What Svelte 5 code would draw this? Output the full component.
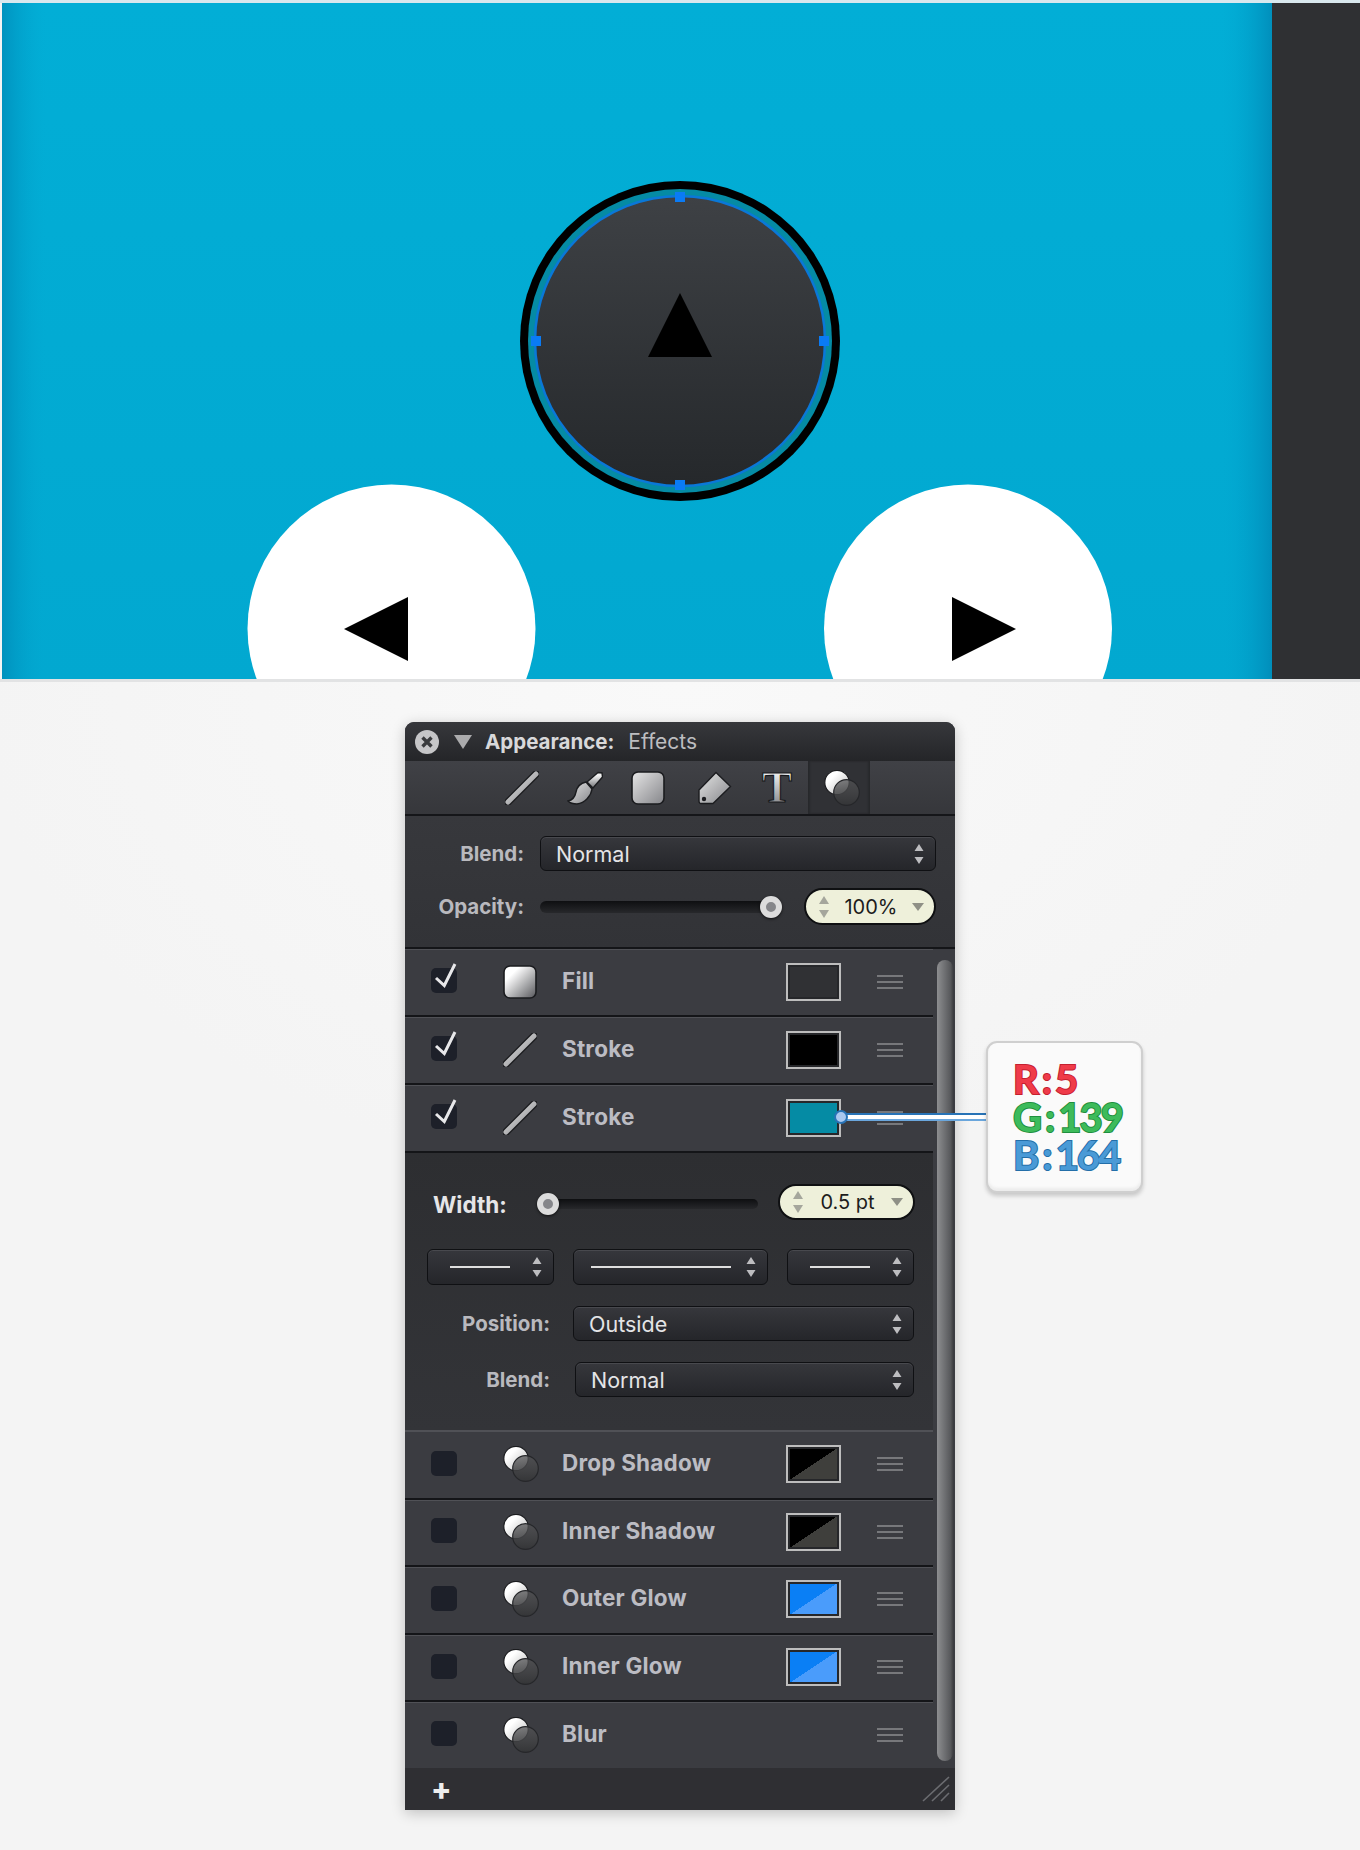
<script>
  const topRows = [
    { name: "Fill", icon: "square", on: true, swatch: "fill" },
    { name: "Stroke", icon: "line", on: true, swatch: "black" },
    { name: "Stroke", icon: "line", on: true, swatch: "teal" },
  ];
  const effectRows = [
    { name: "Drop Shadow", swatch: "shade" },
    { name: "Inner Shadow", swatch: "shade" },
    { name: "Outer Glow", swatch: "glow" },
    { name: "Inner Glow", swatch: "glow" },
    { name: "Blur", swatch: null },
  ];
</script>

{#snippet lineIcon()}
  <svg class="icon" width="34" height="34" viewBox="0 0 34 34">
    <path d="M3 31 L31 3" stroke="#1b1c1f" stroke-width="7.5" stroke-linecap="round" />
    <path d="M3 31 L31 3" stroke="url(#metal)" stroke-width="5" stroke-linecap="round" />
  </svg>
{/snippet}

{#snippet squareIcon(fill)}
  <svg class="icon" width="34" height="34" viewBox="0 0 34 34">
    <rect x="1" y="1" width="32" height="32" rx="6" fill="url(#{fill})" stroke="#1b1c1f" stroke-width="1.6" />
  </svg>
{/snippet}

{#snippet circlesIcon()}
  <svg class="icon" width="36" height="36" viewBox="0 0 36 36">
    <circle cx="13" cy="12.5" r="12.2" fill="url(#pearl)" stroke="#1b1c1f" stroke-width="1.2" />
    <circle cx="22.5" cy="22.5" r="12.8" fill="url(#smoke)" stroke="#26272a" stroke-width="1.2" />
  </svg>
{/snippet}

{#snippet arrows()}
  <svg class="arrows" width="10" height="20" viewBox="0 0 10 20">
    <path d="M5 0 L9.5 7 H0.5Z M0.5 13 H9.5 L5 20Z" fill="#bdbdc0" />
  </svg>
{/snippet}

{#snippet pillValue(text)}
  <div class="pill">
    <svg width="12" height="22" viewBox="0 0 12 22"><path d="M6 0 L11 8 H1Z M1 14 H11 L6 22Z" fill="#a5a69c" /></svg>
    <span>{text}</span>
    <svg width="12" height="8" viewBox="0 0 12 8"><path d="M0 0 H12 L6 8Z" fill="#8f9086" /></svg>
  </div>
{/snippet}

{#snippet row(r, extraClass)}
  <div class="row {extraClass}">
    <svg class="check" width="30" height="36" viewBox="0 0 30 36">
      <rect x="2" y="8" width="26" height="25" rx="5" fill="#1d2029" />
      {#if r.on}
        <path d="M7 18 L15.3 25.5 L26 4" fill="none" stroke="#e8e8ea" stroke-width="3" />
      {/if}
    </svg>
    <div class="row-icon">
      {#if r.icon === "square"}
        {@render squareIcon("pearlsquare")}
      {:else if r.icon === "line"}
        {@render lineIcon()}
      {:else}
        {@render circlesIcon()}
      {/if}
    </div>
    <span class="row-name">{r.name}</span>
    {#if r.swatch}
      <div class="swatch {r.swatch}"></div>
    {/if}
    <div class="handle"><i></i><i></i><i></i></div>
  </div>
{/snippet}

<svg class="defs" width="0" height="0">
  <defs>
    <linearGradient id="metal" x1="0" y1="0" x2="1" y2="1">
      <stop offset="0" stop-color="#e6e6e6" />
      <stop offset="1" stop-color="#85868a" />
    </linearGradient>
    <linearGradient id="pearl" x1="0" y1="0" x2="1" y2="1">
      <stop offset="0.3" stop-color="#ffffff" />
      <stop offset="1" stop-color="#b5b5b5" />
    </linearGradient>
    <linearGradient id="pearlsquare" x1="0" y1="0" x2="1" y2="1">
      <stop offset="0.25" stop-color="#ffffff" />
      <stop offset="1" stop-color="#55565a" />
    </linearGradient>
    <linearGradient id="smoke" x1="0" y1="0" x2="0" y2="1">
      <stop offset="0" stop-color="#555557" stop-opacity="0.72" />
      <stop offset="1" stop-color="#343537" stop-opacity="0.95" />
    </linearGradient>
    <linearGradient id="glyph" x1="0" y1="0" x2="0" y2="1">
      <stop offset="0.2" stop-color="#f2f2f2" />
      <stop offset="0.85" stop-color="#8a8b8e" />
    </linearGradient>
    <linearGradient id="disc" x1="0" y1="0" x2="0" y2="1">
      <stop offset="0" stop-color="#3e4145" />
      <stop offset="1" stop-color="#25282b" />
    </linearGradient>
    <linearGradient id="edge" x1="0" y1="0" x2="1" y2="0">
      <stop offset="0" stop-color="#0087b5" stop-opacity="0.7" />
      <stop offset="0.035" stop-color="#00a8d2" stop-opacity="0" />
      <stop offset="0.96" stop-color="#00a8d2" stop-opacity="0" />
      <stop offset="1" stop-color="#0087b5" stop-opacity="0.8" />
    </linearGradient>
    <linearGradient id="sea" x1="0" y1="0" x2="0" y2="1">
      <stop offset="0" stop-color="#02aed6" />
      <stop offset="1" stop-color="#02a8d0" />
    </linearGradient>
  </defs>
</svg>

<div class="page">
  <svg class="artboard" width="1360" height="682" viewBox="0 0 1360 682">
    <rect width="1360" height="682" fill="#f4f4f4" />
    <rect width="1360" height="3" fill="#d9e8ee" />
    <rect x="2" y="3" width="1270" height="676" fill="url(#sea)" />
    <rect x="2" y="3" width="1270" height="676" fill="url(#edge)" />
    <rect x="1272" y="3" width="88" height="676" fill="#2f3033" />

    <circle cx="680" cy="341" r="160" fill="#000" />
    <circle cx="680" cy="341" r="152" fill="#058ba4" />
    <circle cx="680" cy="341" r="145" fill="url(#disc)" stroke="#0a78d8" stroke-width="2.5" />
    <path d="M680 293 L712 357 H648Z" fill="#000" />
    <g fill="#0a7bf5">
      <rect x="675" y="192" width="10" height="10" />
      <rect x="675" y="480" width="10" height="10" />
      <rect x="531" y="336" width="10" height="10" />
      <rect x="819" y="336" width="10" height="10" />
    </g>

    <circle cx="391.5" cy="628.5" r="144" fill="#fff" />
    <circle cx="968" cy="628.5" r="144" fill="#fff" />
    <path d="M344 629 L408 597 V661Z" fill="#000" />
    <path d="M1016 629 L952 597 V661Z" fill="#000" />

    <rect y="679" width="1360" height="3" fill="#e2e3e4" />
  </svg>

  <div class="stage">
    <div class="panel">
      <header class="titlebar">
        <svg width="24" height="24" viewBox="0 0 24 24">
          <circle cx="12" cy="12" r="12" fill="#c6c6c8" />
          <path d="M7.5 7.5 L16.5 16.5 M16.5 7.5 L7.5 16.5" stroke="#3a3b3e" stroke-width="3.4" />
        </svg>
        <svg class="disclosure" width="18" height="14" viewBox="0 0 18 14"><path d="M0 0 H18 L9 14Z" fill="#ababad" /></svg>
        <strong>Appearance:</strong>
        <span>Effects</span>
      </header>

      <nav class="toolbar">
        {@render lineIcon()}
        <svg class="icon" width="36" height="34" viewBox="0 0 36 34">
          <path d="M1 30 C6 29 8 26 9 21 C10 16 14 12 19 11 L25 18 C24 25 18 32 10 33 C6 33 3 32 1 30Z" fill="url(#metal)" stroke="#1b1c1f" stroke-width="1.4" />
          <path d="M20 11 L31 1.5 L35 2 L35.5 6 L26 17Z" fill="url(#glyph)" stroke="#1b1c1f" stroke-width="1.4" />
        </svg>
        {@render squareIcon("metal")}
        <svg class="icon tag" width="34" height="34" viewBox="0 0 34 34">
          <path d="M18 1.5 L32.5 15.5 L15 32.5 L3 32.5 Q1 32.5 1 30 L1 19Z" fill="url(#metal)" stroke="#1b1c1f" stroke-width="1.4" />
          <circle cx="6" cy="28" r="2.2" fill="#1b1c1f" />
        </svg>
        <svg class="icon t-icon" width="34" height="52" viewBox="0 0 34 52">
          <text x="17" y="40" text-anchor="middle" class="t-glyph" fill="url(#glyph)" stroke="#17181b" stroke-width="1.2">T</text>
        </svg>
        <div class="tab-active">{@render circlesIcon()}</div>
      </nav>

      <section class="controls">
        <div class="field">
          <span class="label">Blend:</span>
          <div class="select grow"><span>Normal</span>{@render arrows()}</div>
        </div>
        <div class="field">
          <span class="label">Opacity:</span>
          <div class="slider">
            <b class="knob" style="left: 231px"></b>
          </div>
          {@render pillValue("100%")}
        </div>
      </section>

      <div class="scroller">
        <div class="list">
          {#each topRows as r}
            {@render row(r, "")}
          {/each}

          <section class="stroke-opts">
            <div class="width-row">
              <span class="width-label">Width:</span>
              <div class="slider thin">
                <b class="knob" style="left: 11px"></b>
              </div>
              {@render pillValue("0.5 pt")}
            </div>
            <div class="style-row">
              <div class="select short"><i class="dash" style="width: 60px"></i>{@render arrows()}</div>
              <div class="select mid"><i class="dash" style="width: 140px"></i>{@render arrows()}</div>
              <div class="select short"><i class="dash" style="width: 60px"></i>{@render arrows()}</div>
            </div>
            <div class="opt-field">
              <span class="label">Position:</span>
              <div class="select wide"><span>Outside</span>{@render arrows()}</div>
            </div>
            <div class="opt-field">
              <span class="label">Blend:</span>
              <div class="select wide narrow"><span>Normal</span>{@render arrows()}</div>
            </div>
          </section>

          {#each effectRows as r, i}
            {@render row(r, i === 0 ? "effect first" : "effect")}
          {/each}
        </div>
        <div class="scrollbar"><div class="thumb"></div></div>
      </div>

      <footer class="footer">
        <span class="plus">+</span>
        <svg width="28" height="26" viewBox="0 0 28 26">
          <path d="M1 25 L27 1 M10 25 L27 9 M19 25 L27 17" stroke="#6b6c70" stroke-width="1.6" fill="none" />
        </svg>
      </footer>

      <!-- colour callout sits over the panel edge -->
      <div class="wire"><b></b></div>
      <div class="callout">
        <div class="rgb r">R<em>:</em>5</div>
        <div class="rgb g">G<em>:</em>139</div>
        <div class="rgb b">B<em>:</em>164</div>
      </div>
    </div>
  </div>
</div>

<style>
  :global(body) {
    margin: 0;
    background: #f4f4f4;
  }

  .defs {
    display: block;
  }

  .page {
    width: 1360px;
    height: 1850px;
    overflow: hidden;
    font-family: Inter, "Liberation Sans", sans-serif;
  }

  .artboard {
    display: block;
  }

  .stage {
    height: 1168px;
    box-sizing: border-box;
    display: flex;
    justify-content: center;
    padding-top: 40px;
    background: radial-gradient(ellipse 700px 500px at 50% 0, #f9f9f9, #f4f4f4);
  }

  .panel {
    position: relative;
    width: 550px;
    height: 1088px;
    display: flex;
    flex-direction: column;
    background: #3b3c41;
    border-radius: 9px 9px 0 0;
    box-shadow: 0 3px 14px rgba(0, 0, 0, 0.22);
  }

  .titlebar {
    height: 39px;
    flex: none;
    display: flex;
    align-items: center;
    padding-left: 10px;
    background: linear-gradient(#37383c, #242528);
    border-radius: 9px 9px 0 0;
    font-size: 21px;
    color: #bdbdc0;
  }

  .disclosure {
    margin-left: 15px;
  }

  .titlebar strong {
    margin-left: 13px;
    font-weight: 700;
    font-size: 20.5px;
    color: #d8d8da;
  }

  .titlebar span {
    margin-left: 14px;
  }

  .toolbar {
    height: 53px;
    flex: none;
    display: flex;
    align-items: center;
    gap: 28px;
    padding-left: 100px;
    background: linear-gradient(#404146, #36373b);
    border-bottom: 2px solid #151619;
  }

  .toolbar .tag {
    margin-left: 5px;
  }

  .toolbar .t-icon {
    margin: -9px 0;
  }

  .toolbar .tab-active {
    height: 53px;
    width: 62px;
    margin-left: -14px;
    padding-left: 6px;
    box-sizing: border-box;
    display: flex;
    align-items: center;
    justify-content: center;
    background: #303135;
    box-shadow: inset 2px 0 2px #28292c, inset -2px 0 2px #28292c;
  }

  .t-glyph {
    font-family: "Liberation Serif", serif;
    font-size: 45px;
    font-weight: 700;
  }

  .icon {
    flex: none;
    display: block;
  }

  .controls {
    height: 131px;
    flex: none;
    box-sizing: border-box;
    padding-top: 20px;
    display: flex;
    flex-direction: column;
    gap: 18px;
    background: linear-gradient(#37383c, #323337);
  }

  .field {
    display: flex;
    align-items: center;
    gap: 17px;
    height: 35px;
    padding-right: 19px;
  }

  .label {
    width: 119px;
    flex: none;
    text-align: right;
    font-size: 20.5px;
    font-weight: 700;
    color: #b9b9be;
  }

  .field .label {
    margin-right: -1px;
  }

  .select {
    box-sizing: border-box;
    height: 35px;
    display: flex;
    align-items: center;
    justify-content: space-between;
    padding: 0 11px 0 15px;
    border: 1.5px solid #0f1013;
    border-radius: 6px;
    background: linear-gradient(#36373c, #25262a);
    box-shadow: inset 0 1px 0 #48494e;
    font-size: 21.5px;
    color: #e4e4e6;
  }

  .grow {
    flex: 1;
  }

  .arrows {
    flex: none;
  }

  .slider {
    position: relative;
    width: 240px;
    height: 12px;
    border-radius: 6px;
    background: linear-gradient(#0e0f11, #27282b);
  }

  .slider.thin {
    width: 221px;
    height: 10px;
    margin: 4px 0 0 -5px;
  }

  .knob {
    position: absolute;
    top: 50%;
    width: 22px;
    height: 22px;
    margin: -11px 0 0 -11px;
    box-sizing: border-box;
    border-radius: 50%;
    border: 6px solid #dcdcdc;
    background: #85868a;
    box-shadow: 0 1px 3px rgba(0, 0, 0, 0.7);
  }

  .pill {
    box-sizing: border-box;
    width: 132px;
    height: 37px;
    margin-left: auto;
    display: flex;
    align-items: center;
    justify-content: space-between;
    padding: 0 10px 0 12px;
    border: 2.5px solid #0f1012;
    border-radius: 19px;
    background: #eef0da;
    font-size: 20px;
    color: #1c1c1c;
  }

  .scroller {
    flex: 1;
    display: flex;
  }

  .list {
    width: 528px;
    flex: none;
  }

  .row {
    box-sizing: border-box;
    height: 68px;
    display: flex;
    align-items: center;
    padding: 0 30px 1px 0;
    border-top: 2px solid #141518;
    box-shadow: inset 0 1px 0 #505156;
  }

  .row.effect {
    height: 67.6px;
  }

  .row.first {
    border-top-color: #505156;
    box-shadow: none;
  }

  .check {
    flex: none;
    margin: -7px 44px 0 24px;
  }

  .row-icon {
    width: 36px;
    flex: none;
  }

  .row-name {
    margin: -3px 0 0 23px;
    font-size: 22.5px;
    font-weight: 700;
    letter-spacing: 0.2px;
    color: #bcbcc3;
  }

  .swatch {
    box-sizing: border-box;
    width: 55px;
    height: 38px;
    margin-left: auto;
    border: 2px solid #bdbdbd;
    outline: 2px solid #26272a;
    outline-offset: -4px;
  }

  .swatch.fill {
    background: #303134;
  }

  .swatch.black {
    background: #000;
  }

  .swatch.teal {
    background: #058ba4;
  }

  .swatch.shade {
    background: linear-gradient(to bottom right, #000 50%, #3f3f3c 50%);
  }

  .swatch.glow {
    background: linear-gradient(to bottom right, #0a7ff5 50%, #4a9cfb 50%);
  }

  .handle {
    width: 26px;
    margin-left: 36px;
    display: flex;
    flex-direction: column;
    gap: 4px;
  }

  .row-name + .handle {
    margin-left: auto;
  }

  .handle i {
    height: 2px;
    background: #77787b;
  }

  .stroke-opts {
    box-sizing: border-box;
    height: 279px;
    padding: 31px 19px 0 22px;
    display: flex;
    flex-direction: column;
    background: linear-gradient(#2d2e31, #333438);
    border-top: 2px solid #141518;
  }

  .width-row {
    height: 36px;
    display: flex;
    align-items: center;
    gap: 20px;
    margin-bottom: 29px;
  }

  .width-label {
    width: 89px;
    margin: 4px 0 0 6px;
    font-size: 22.5px;
    font-weight: 700;
    color: #e6e6e8;
  }

  .width-row .pill {
    width: 137px;
    height: 36px;
    margin-right: -1px;
  }

  .style-row {
    display: flex;
    gap: 19px;
    margin-bottom: 21px;
  }

  .select.short {
    width: 127px;
    height: 36px;
    padding-left: 22px;
  }

  .select.mid {
    width: 195px;
    height: 36px;
    padding-left: 17px;
  }

  .dash {
    height: 2px;
    background: #dedede;
  }

  .opt-field {
    display: flex;
    align-items: center;
    gap: 23px;
    margin-bottom: 21px;
  }

  .opt-field .label {
    flex: 1;
    margin-right: 0;
  }

  .select.wide {
    width: 341px;
    flex: none;
  }

  .select.narrow {
    width: 339px;
  }

  .opt-field:has(.narrow) {
    gap: 25px;
  }

  .scrollbar {
    flex: 1;
    padding: 11px 2px 7px 4px;
    box-sizing: border-box;
    border-top: 2px solid #141518;
  }

  .thumb {
    height: 100%;
    border-radius: 8px;
    background: linear-gradient(to right, #8d8e90, #57585b 85%, #3f4043);
  }

  .footer {
    height: 42px;
    flex: none;
    display: flex;
    align-items: center;
    justify-content: space-between;
    padding: 0 5px 0 26px;
    background: #2f2f33;
  }

  .plus {
    font-size: 30px;
    font-weight: 800;
    line-height: 1;
    color: #eeeeee;
  }

  .wire {
    position: absolute;
    left: 434px;
    top: 391px;
    width: 148px;
    height: 8px;
    box-sizing: border-box;
    background: #fff;
    border-top: 2px solid #2873b6;
    border-bottom: 2px solid #6aa6dc;
  }

  .wire b {
    position: absolute;
    left: -5px;
    top: -5px;
    width: 14px;
    height: 14px;
    box-sizing: border-box;
    border-radius: 50%;
    background: #a9c8ef;
    border: 2px solid #2873b6;
  }

  .callout {
    position: absolute;
    left: 581px;
    top: 319px;
    width: 157px;
    height: 152px;
    box-sizing: border-box;
    padding: 17px 0 0 25px;
    background: #fafafa;
    border: 2px solid #cfcfcf;
    border-radius: 11px;
    box-shadow: 0 3px 4px rgba(0, 0, 0, 0.18), inset 0 -3px 3px #ececec;
  }

  .rgb {
    height: 38px;
    line-height: 38px;
    font-family: Lato, "Open Sans", sans-serif;
    font-size: 40px;
    font-weight: 700;
    letter-spacing: -2px;
    white-space: nowrap;
    -webkit-text-stroke: 2px;
    paint-order: stroke fill;
  }

  .rgb em {
    font-style: normal;
    margin: 0 5px 0 5px;
  }

  .r {
    color: #ef3b49;
    -webkit-text-stroke-color: #c4202f;
  }

  .g {
    color: #3dbb5b;
    -webkit-text-stroke-color: #1f8f3e;
  }

  .b {
    color: #4a9ad6;
    -webkit-text-stroke-color: #236ea8;
  }
</style>
